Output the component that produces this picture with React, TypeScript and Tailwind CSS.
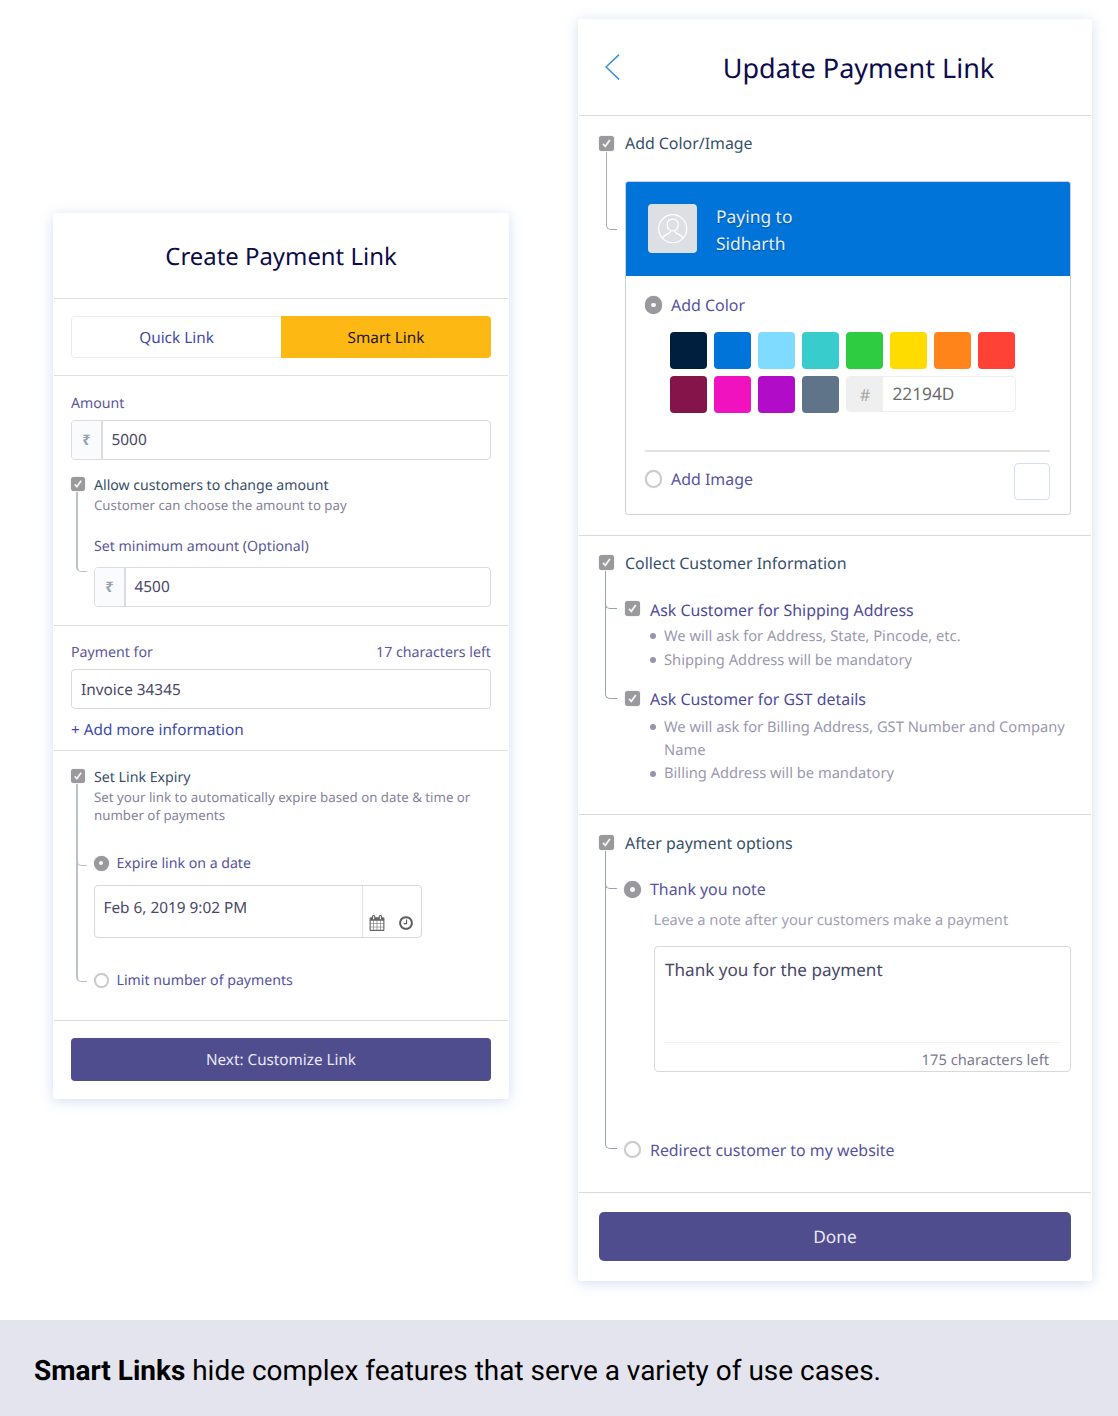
import React from 'react';

const CALENDAR =
  'M192 1664h288v-288h-288v288zm352 0h320v-288h-320v288zm-352-352h288v-320h-288v320zm352 0h320v-320h-320v320zm-352-384h288v-288h-288v288zm736 736h320v-288h-320v288zm-384-736h320v-288h-320v288zm768 736h288v-288h-288v288zm-384-352h320v-320h-320v320zm-352-864v-288q0-13-9.5-22.5t-22.5-9.5h-64q-13 0-22.5 9.5t-9.5 22.5v288q0 13 9.5 22.5t22.5 9.5h64q13 0 22.5-9.5t9.5-22.5zm736 864h288v-320h-288v320zm-384-384h320v-288h-320v288zm384 0h288v-288h-288v288zm32-480v-288q0-13-9.5-22.5t-22.5-9.5h-64q-13 0-22.5 9.5t-9.5 22.5v288q0 13 9.5 22.5t22.5 9.5h64q13 0 22.5-9.5t9.5-22.5zm384-64v1280q0 52-38 90t-90 38h-1408q-52 0-90-38t-38-90v-1280q0-52 38-90t90-38h128v-96q0-66 47-113t113-47h64q66 0 113 47t47 113v96h384v-96q0-66 47-113t113-47h64q66 0 113 47t47 113v96h128q52 0 90 38t38 90z';
const CLOCK =
  'M1024 544v448q0 14-9 23t-23 9h-320q-14 0-23-9t-9-23v-64q0-14 9-23t23-9h224v-352q0-14 9-23t23-9h64q14 0 23 9t9 23zm416 352q0-148-73-273t-198-198-273-73-273 73-198 198-73 273 73 273 198 198 273 73 273-73 198-198 73-273zm224 0q0 209-103 385.5t-279.5 279.5-385.5 103-385.5-103-279.5-279.5-103-385.5 103-385.5 279.5-279.5 385.5-103 385.5 103 279.5 279.5 103 385.5z';

const SWATCHES = [
  'bg-[#001f3f]', 'bg-[#0074d9]', 'bg-[#7fdbff]', 'bg-[#39cccc]',
  'bg-[#2ecc40]', 'bg-[#ffdc00]', 'bg-[#ff851b]', 'bg-[#ff4136]',
  'bg-[#85144b]', 'bg-[#f012be]', 'bg-[#b10dc9]', 'bg-[#607489]',
];

function Check({ className }: { className: string }) {
  return (
    <span className={`block shrink-0 rounded-[3px] bg-[#9a999e] shadow-[0_0_1px_#9a999e] ${className}`}>
      <svg viewBox="0 0 14 14" className="block size-full" fill="none" stroke="#f4f4f5" strokeWidth="1.7">
        <path d="M3.7 7.4l2.2 2.3 4.2-6" />
      </svg>
    </span>
  );
}

function Radio({ on, className }: { on?: boolean; className: string }) {
  return (
    <span
      className={`flex shrink-0 items-center justify-center rounded-full ${
        on ? 'bg-[#99989d] shadow-[0_0_1px_#99989d]' : 'border-2 border-[#cbcbcd] bg-white shadow-[0_0_1px_#ddd]'
      } ${className}`}
    >
      {on && <span className="size-[4.5px] rounded-full bg-[#f8f8f8]" />}
    </span>
  );
}

function Money({ value }: { value: string }) {
  return (
    <div className="flex h-[40px] overflow-hidden rounded-[4px] border border-[#dcdce0] bg-white">
      <div className="flex w-[31px] items-center justify-center border-r-2 border-[#dcdce0] bg-[#fafbfd] pt-[2px] text-[14.5px] font-bold text-[#95a3b1]">
        ₹
      </div>
      <div className="pl-[8.5px] text-[15.4px] leading-[38px] text-[#4a4868]">{value}</div>
    </div>
  );
}

function LinkForm() {
  return (
    <div className="mt-[213px] ml-[53px] h-[886px] w-[456px] rounded-[3px] bg-white px-px shadow-[0_2px_13px_rgba(85,125,205,0.26)]">
      <h1 className="h-[86px] border-b border-[#dedede] pt-px text-center text-[23.9px] leading-[86px] text-[#0d0c4b]">
        Create Payment Link
      </h1>
      <div className="h-[77px] border-b border-[#e0e0e0] px-[17px] pt-[17px]">
        <div className="flex h-[42px] overflow-hidden rounded-[4px] text-center text-[15.35px] leading-[40px]">
          <div className="w-1/2 rounded-l-[4px] border border-r-0 border-[#ebecf4] pt-px text-[#3e4ba8]">Quick Link</div>
          <div className="w-1/2 bg-[#fdb813] pt-[2px] text-[#1b1726]">Smart Link</div>
        </div>
      </div>
      <div className="h-[250px] border-b border-[#dedede] px-[17px] pt-[17px]">
        <div className="mb-[7px] h-5 pt-px text-[14.15px] leading-5 text-[#5a579b]">Amount</div>
        <Money value="5000" />
        <div className="mt-[15px] flex">
          <div className="w-[23px]">
            <Check className="mt-[2px] size-[14px]" />
            <div className="mt-px ml-[5px] h-[80px] w-[11px] rounded-bl-[5px] border-b border-l-2 border-[#b9c3cf]" />
          </div>
          <div className="flex-1">
            <div className="h-5 pt-px text-[14.12px] leading-5 text-[#36506a]">Allow customers to change amount</div>
            <div className="h-5 text-[13.25px] leading-[21px] text-[#85839b]">Customer can choose the amount to pay</div>
            <div className="mt-[21px] mb-[11px] h-5 pt-px text-[14.17px] leading-5 text-[#5a579b]">Set minimum amount (Optional)</div>
            <Money value="4500" />
          </div>
        </div>
      </div>
      <div className="h-[125px] border-b border-[#e0e0e0] px-[17px] pt-4">
        <div className="mb-[7px] flex h-5 justify-between pt-px text-[14.2px] leading-5 text-[#5a579b]">
          <span>Payment for</span>
          <span>17 characters left</span>
        </div>
        <div className="h-[40px] rounded-[4px] border border-[#d9d9de] pt-px pl-[9px] text-[15.36px] leading-[38px] text-[#4a4868]">
          Invoice 34345
        </div>
        <div className="mt-[10px] h-5 pt-px text-[15.3px] leading-5 text-[#3e4ba8]">+ Add more information</div>
      </div>
      <div className="flex h-[270px] border-b border-[#dedede] px-[17px] pt-4">
        <div className="w-[23px]">
          <Check className="mt-[2px] size-[14px]" />
          <div className="mt-px ml-[5px] h-[82px] w-[11px] rounded-bl-[5px] border-b border-l-2 border-[#b9c3cf]" />
          <div className="-mt-[6px] ml-[5px] h-[122px] w-[11px] rounded-bl-[5px] border-b border-l-2 border-[#b9c3cf]" />
        </div>
        <div className="flex-1">
          <div className="h-5 pt-px text-[14.2px] leading-5 text-[#36506a]">Set Link Expiry</div>
          <div className="mt-px h-[37px] text-[13.28px] leading-[18.4px] text-[#85839b]">
            Set your link to automatically expire based on date &amp; time or
            <br />
            number of payments
          </div>
          <div className="mt-7 flex h-5 items-center gap-[8px] text-[14.15px] leading-5 text-[#5553a0]">
            <Radio on className="-ml-[0.5px] size-[15px]" />
            <span className="pt-[2px]">Expire link on a date</span>
          </div>
          <div className="mt-3 flex h-[53px] w-[328px] rounded-[4px] border border-[#d8d8d8]">
            <div className="w-[268px] border-r border-[#e4e4e4] pt-3 pl-[8.5px] text-[15.35px] leading-5 text-[#4a4868]">
              Feb 6, 2019 9:02 PM
            </div>
            <div className="flex flex-1 items-start gap-[13px] pt-[29px] pl-[6px]">
              <svg viewBox="0 0 1792 1792" className="size-[16px]" fill="#666"><path d={CALENDAR} /></svg>
              <svg viewBox="0 0 1792 1792" className="size-[16px]" fill="#5e5e5e"><path d={CLOCK} /></svg>
            </div>
          </div>
          <div className="mt-8 flex h-5 items-center gap-[8px] text-[14.15px] leading-5 text-[#5553a0]">
            <Radio className="-ml-[0.5px] size-[15px]" />
            <span className="pt-[2px]">Limit number of payments</span>
          </div>
        </div>
      </div>
      <div className="px-[17px] pt-[17px]">
        <div className="h-[43px] rounded-[4px] bg-[#504d8f] text-center text-[15.25px] leading-[45px] text-[#e9e8f6]">
          Next: Customize Link
        </div>
      </div>
    </div>
  );
}

function Bullet({ text, className }: { text: React.ReactNode; className: string }) {
  return (
    <li className={`flex text-[14.7px] text-[#9b99b0] ${className}`}>
      <span className="mt-[8.5px] mr-[8px] size-[6px] shrink-0 rounded-full bg-[#9795ae]" />
      <span className="whitespace-nowrap">{text}</span>
    </li>
  );
}

function CustomizeForm() {
  return (
    <div className="mt-[19px] ml-[69px] h-[1262px] w-[514px] rounded-[3px] bg-white px-px shadow-[0_2px_13px_rgba(85,125,205,0.26)]">
      <div className="flex h-[97px] items-center border-b border-[#dedede] pl-[26px]">
        <svg viewBox="0 0 15 26" className="-mt-px h-[26px] w-[15px]" fill="none" stroke="#3d8fd6" strokeWidth="1.5">
          <path d="M14 .6L1 13l13 12.4" />
        </svg>
        <h1 className="flex-1 pt-px pl-[6px] text-center text-[27px] leading-9 text-[#0d0c4b]">Update Payment Link</h1>
      </div>

      <div className="flex h-[420px] border-b border-[#dadadd] px-5 pt-[17px]">
        <div className="w-[26px]">
          <Check className="mt-[3px] size-[15px]" />
          <div className="mt-px ml-[7px] h-[78px] w-[11px] rounded-bl-[5px] border-b border-l border-[#a3abb8]" />
        </div>
        <div className="flex-1">
          <div className="h-5 text-[15.9px] leading-5 text-[#36506a]">Add Color/Image</div>
          <div className="mt-7 h-[334px] overflow-hidden rounded-[3px] border border-[#ccd0dc]">
            <div className="flex h-[94px] gap-[19px] bg-[#0074d9] pt-[21px] pl-[22px]">
              <div className="mt-px flex size-[49px] items-center justify-center rounded-[4px] bg-[#dcdfe4]">
                <svg viewBox="0 0 30 30" className="size-[30px]" fill="none" stroke="#fff" strokeWidth="1.2">
                  <circle cx="14.7" cy="14.7" r="14" />
                  <path d="M14.700 5.200c3.300 0 5.500 2.300 5.500 5.700 0 3.300-2.400 6.100-5.500 6.100s-5.500-2.800-5.500-6.100c0-3.400 2.200-5.700 5.500-5.700z" />
                  <path d="M12.500 16.700c0 1.900-.9 2.500-2.700 3.200-2.300.9-4.200 1.800-5.100 4.200M16.900 16.700c0 1.900.9 2.500 2.700 3.200 2.300.9 4.200 1.800 5.100 4.200" />
                </svg>
              </div>
              <div className="pt-px text-[17.4px] leading-[27px] text-[#e6eef8] [text-shadow:0_1px_1px_rgba(0,0,0,0.35)]">
                Paying to
                <br />
                Sidharth
              </div>
            </div>
            <div className="mt-[19px] flex h-5 items-center gap-[9px] pl-[19px] text-[15.95px] leading-5 text-[#5553a0]">
              <Radio on className="-ml-[0.5px] size-[17.5px]" />
              <span>Add Color</span>
            </div>
            <div className="mt-[17px] ml-[44px] flex w-[352px] flex-wrap gap-[7px]">
              {SWATCHES.map((c) => (
                <span key={c} className={`size-[37px] rounded-[4px] ${c}`} />
              ))}
              <div className="flex h-[36px] w-[170px] overflow-hidden rounded-[4px] border border-[#eee]">
                <div className="w-[36px] bg-[#efefef] text-center text-[16.5px] leading-[35px] text-[#a6a6a9]">#</div>
                <div className="pl-[9.5px] text-[17.25px] leading-[36px] text-[#6c6c6c]">22194D</div>
              </div>
            </div>
            <div className="mt-[37px] mr-5 ml-[19px] h-[2px] bg-[#e2e2e3]" />
            <div className="mt-[11px] flex justify-between pr-5 pl-[19px]">
              <div className="mt-[6px] flex h-5 items-center gap-[9px] text-[15.95px] leading-5 text-[#5553a0]">
                <Radio className="-ml-[0.5px] size-[17.5px]" />
                <span>Add Image</span>
              </div>
              <div className="h-[37px] w-[36px] rounded-[4px] border border-[#d5dfee]" />
            </div>
          </div>
        </div>
      </div>

      <div className="flex h-[279px] border-b border-[#dadadd] px-5 pt-[17px]">
        <div className="w-[26px]">
          <Check className="mt-[2px] size-[15px]" />
          <div className="mt-px ml-[6px] h-[38px] w-[12px] rounded-bl-[5px] border-b border-l border-[#94a3b8]" />
          <div className="-mt-[6px] ml-[6px] h-[96px] w-[12px] rounded-bl-[5px] border-b border-l border-[#94a3b8]" />
        </div>
        <div className="flex-1">
          <div className="h-5 text-[15.9px] leading-5 text-[#36506a]">Collect Customer Information</div>
          <div className="mt-[27px] flex h-5 gap-[10px] text-[15.9px] leading-5 text-[#4d4b9c]">
            <Check className="mt-[1px] size-[15px]" />
            <span>Ask Customer for Shipping Address</span>
          </div>
          <ul className="mt-[4px] mb-[17px] pl-[25px]">
            <Bullet className="leading-6" text="We will ask for Address, State, Pincode, etc." />
            <Bullet className="leading-6" text="Shipping Address will be mandatory" />
          </ul>
          <div className="flex h-5 gap-[10px] text-[15.9px] leading-5 text-[#4d4b9c]">
            <Check className="mt-[2px] size-[15px]" />
            <span>Ask Customer for GST details</span>
          </div>
          <ul className="mt-[6.5px] pl-[25px]">
            <Bullet
              className="leading-[23.4px]"
              text={
                <>
                  We will ask for Billing Address, GST Number and Company
                  <br />
                  Name
                </>
              }
            />
            <Bullet className="leading-[23.4px]" text="Billing Address will be mandatory" />
          </ul>
        </div>
      </div>

      <div className="flex h-[378px] border-b border-[#dadadd] px-5 pt-[18px]">
        <div className="w-[26px]">
          <Check className="mt-[2px] size-[15px]" />
          <div className="mt-px ml-[6px] h-[38px] w-[12px] rounded-bl-[5px] border-b border-l border-[#94a3b8]" />
          <div className="-mt-[6px] ml-[6px] h-[266px] w-[12px] rounded-bl-[5px] border-b border-l border-[#94a3b8]" />
        </div>
        <div className="flex-1">
          <div className="h-5 text-[15.9px] leading-5 text-[#36506a]">After payment options</div>
          <div className="mt-[26px] flex h-5 items-center gap-2 text-[15.9px] leading-5 text-[#5553a0]">
            <Radio on className="mt-[1px] -ml-px size-[17px]" />
            <span className="pl-px">Thank you note</span>
          </div>
          <div className="mt-[10px] ml-[28.5px] h-5 pt-px text-[14.7px] leading-5 text-[#a3a1b5]">
            Leave a note after your customers make a payment
          </div>
          <div className="mt-[17px] ml-[29px] flex h-[126px] flex-col rounded-[4px] border border-[#d9d9dc] px-[9px]">
            <div className="mt-[13.5px] pl-px text-[17.1px] leading-5 text-[#4a4868]">Thank you for the payment</div>
            <div className="mt-auto h-[29px] border-t border-[#f3f3f4] pr-[12px] text-right text-[14.7px] leading-[35px] text-[#7c7a93]">
              175 characters left
            </div>
          </div>
          <div className="mt-[67.5px] flex h-5 items-center gap-2 text-[15.9px] leading-5 text-[#5553a0]">
            <Radio className="-ml-px size-[17px]" />
            <span className="pl-px">Redirect customer to my website</span>
          </div>
        </div>
      </div>

      <div className="px-5 pt-[19px]">
        <div className="h-[49px] rounded-[5px] bg-[#504d8f] text-center text-[17.3px] leading-[52px] text-[#e9e8f6]">Done</div>
      </div>
    </div>
  );
}

export default function App() {
  return (
    <div className="w-[1118px] bg-white font-['Noto_Sans',sans-serif] [text-rendering:geometricPrecision]">
      <div className="flex h-[1320px] items-start overflow-hidden">
        <LinkForm />
        <CustomizeForm />
      </div>
      <div className="h-[96px] bg-[#e4e4ee] pl-[34px] font-['Roboto',sans-serif] text-[27.98px] leading-[102px] text-black">
        <b className="font-bold">Smart Links</b> hide complex features that serve a variety of use cases.
      </div>
    </div>
  );
}
